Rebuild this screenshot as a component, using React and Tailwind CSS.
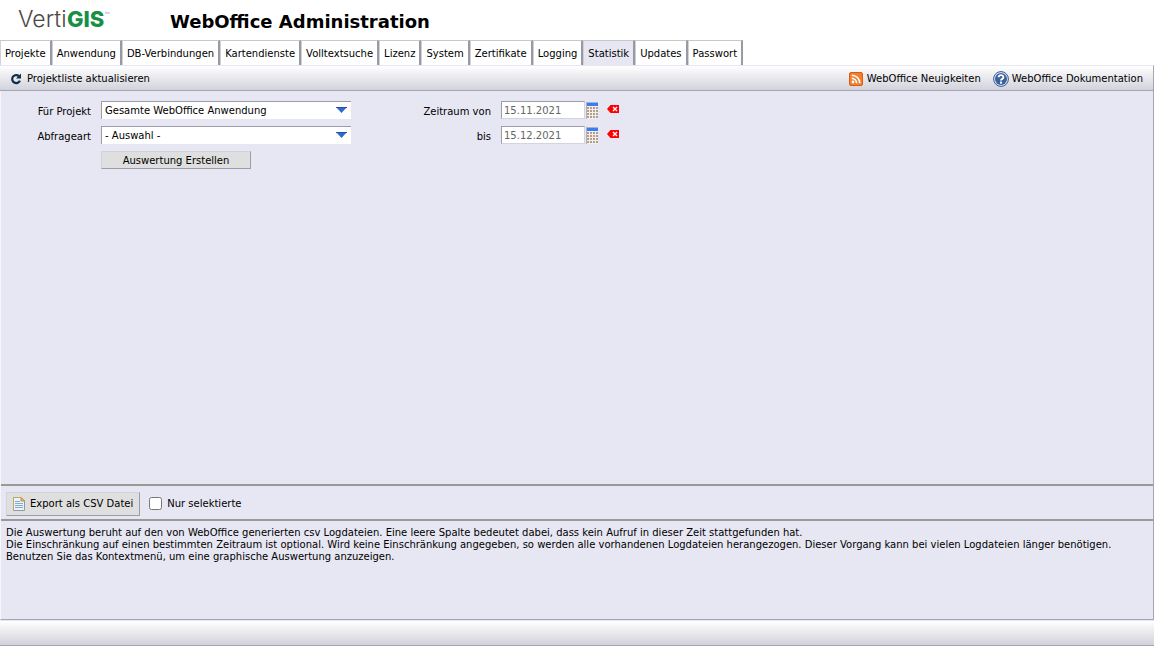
import { useState } from "react";

const tabs = [
  "Projekte",
  "Anwendung",
  "DB-Verbindungen",
  "Kartendienste",
  "Volltextsuche",
  "Lizenz",
  "System",
  "Zertifikate",
  "Logging",
  "Statistik",
  "Updates",
  "Passwort"
];

const Logo = () => (
  <svg width="96" height="32" viewBox="0 0 96 32" role="img" aria-label="VertiGIS">
    <text x="0" y="23" fill="#4d4744" fontSize="23" fontFamily="Inter, sans-serif" fontWeight="300">Verti</text>
    <text x="49" y="23" fill="#178f45" fontSize="22" fontFamily="Inter, sans-serif" fontWeight="800">GIS</text>
    <path d="M87 8.5H89M88 8.5V10M89.7 10V8.5L90.4 9.3L91.1 8.5V10" fill="none" stroke="#999" strokeWidth="0.5" />
  </svg>
);

const RefreshIcon = () => (
  <svg width="12" height="12" viewBox="0 0 12 12" aria-hidden="true">
    <path d="M8.9 3.1A4 4 0 1 0 9.9 7.6" fill="none" stroke="#0f2f47" strokeWidth="2.2" />
    <path d="M11 0.6V5.6H6Z" fill="#0f2f47" />
  </svg>
);

const FeedIcon = () => (
  <svg width="14" height="14" viewBox="0 0 14 14" aria-hidden="true">
    <rect x="0.5" y="0.5" width="13" height="13" rx="1.5" fill="#ee8130" stroke="#dd5a12" />
    <circle cx="4" cy="10" r="1.4" fill="#fff" />
    <path d="M2.8 6.4A4.8 4.8 0 0 1 7.6 11.2M2.8 3.2A8 8 0 0 1 10.8 11.2" fill="none" stroke="#fff" strokeWidth="1.6" />
  </svg>
);

const HelpIcon = () => (
  <svg width="16" height="16" viewBox="0 0 16 16" aria-hidden="true">
    <circle cx="8" cy="8" r="7.4" fill="#dfe8f4" stroke="#33598f" />
    <circle cx="8" cy="8" r="6" fill="#3a629c" />
    <path d="M5.6 6.3C5.6 3.4 10.4 3.5 10.4 6.2C10.4 7.9 8 7.8 8 9.6" fill="none" stroke="#fff" strokeWidth="1.9" />
    <rect x="7" y="10.6" width="2" height="2" fill="#fff" />
  </svg>
);

const CalendarIcon = () => (
  <svg width="12" height="17" viewBox="0 0 12 17" shapeRendering="crispEdges" aria-hidden="true">
    <rect width="12" height="17" fill="#b0b0b6" />
    <rect x="1" y="1" width="11" height="3" fill="#3a7cf8" />
    <rect x="1" y="4" width="11" height="13" fill="#f0f0f0" />
    {[5, 8, 11, 14].map((y) =>
      [1, 4, 7, 10].map((x) => (
        <rect key={`${x}-${y}`} x={x} y={y} width="2" height="2" fill={(x + y) % 2 ? "#a5a5a5" : "#cf9468"} />
      ))
    )}
  </svg>
);

const ClearIcon = () => (
  <svg width="12" height="8" viewBox="0 0 12 8" aria-hidden="true">
    <path d="M0 4L3.5 0H12V8H3.5Z" fill="#f00" />
    <path d="M6 2L10 6M10 2L6 6" stroke="#fff" strokeWidth="1.3" />
  </svg>
);

const FileIcon = () => (
  <svg width="12" height="14" viewBox="0 0 12 14" aria-hidden="true">
    <path d="M0.5 0.5H8L11.5 4V13.5H0.5Z" fill="#eaf3fc" stroke="#8f9aa5" />
    <path d="M0.5 13V0.5H8" fill="none" stroke="#c5a75e" />
    <path d="M8 0.5V4H11.5Z" fill="#e8c568" stroke="#b8913c" />
    <path d="M2 4.5H7M2 6.5H10M2 8.5H10M2 10.5H10" stroke="#86a9cf" />
  </svg>
);

const SelectField = ({ id, label, options }) => (
  <>
    <label htmlFor={id} className="pt-[5px] text-right">{label}</label>
    <div className="relative">
      <select
        id={id}
        className="block h-[18px] w-full appearance-none border-t border-l border-[#9c9cab] bg-white pr-5 pl-[3px] text-[10px] outline-none"
      >
        {options.map((option) => <option key={option}>{option}</option>)}
      </select>
      <svg className="pointer-events-none absolute top-[6px] right-1" width="11" height="6" viewBox="0 0 11 6" aria-hidden="true">
        <path d="M0 0H11L5.5 6Z" fill="#3069cf" />
        <path d="M0 0.5H11" stroke="#24509f" />
      </svg>
    </div>
  </>
);

const DateField = ({ id, label, value }) => {
  const [date, setDate] = useState(value);

  return (
    <>
      <label htmlFor={id} className="pt-[5px] text-right">{label}</label>
      <div className="flex h-[18px] items-start">
        <input
          id={id}
          value={date}
          onChange={(event) => setDate(event.target.value)}
          className="h-[18px] w-[84px] border border-t-[#9c9cab] border-r-[#d4d4de] border-b-[#d4d4de] border-l-[#9c9cab] bg-white px-[2px] text-[10px] text-[#666] outline-none"
        />
        <button type="button" aria-label="Kalender" className="ml-px pt-px"><CalendarIcon /></button>
        <button type="button" aria-label="Datum löschen" className="ml-[9px] pt-1" onClick={() => setDate("")}><ClearIcon /></button>
      </div>
    </>
  );
};

export default function App() {
  return (
    <div className="flex min-h-screen flex-col bg-white font-['DejaVu_Sans',Verdana,sans-serif] text-[10px] leading-3 text-black">
      <header className="flex h-10 items-center">
        <div className="w-[170px] pl-[18px]"><Logo /></div>
        <h1 className="pt-1 text-lg font-bold">WebOffice Administration</h1>
      </header>

      <nav className="flex">
        {tabs.map((tab) => (
          <a
            key={tab}
            href="#"
            className={
              tab === "Statistik"
                ? "border-t border-r-2 border-l border-t-[#c8c8c8] border-r-[#9999a6] border-l-[#d0d0d8] bg-[#e7e7f3] px-1 pt-[7px] pb-[5px]"
                : "border-t border-r-2 border-l border-t-[#c8c8c8] border-r-[#9999a6] border-l-[#d0d0d8] px-1 pt-[7px] pb-[5px]"
            }
          >
            {tab}
          </a>
        ))}
      </nav>

      <div className="flex h-[26px] items-center justify-between border-t border-r border-b border-t-[#e7e7f3] border-r-[#a5a5b2] border-b-[#a5a5b2] bg-linear-to-b from-white to-[#d2d2dc] px-[10px] pt-px">
        <button type="button" className="flex items-center gap-[5px]"><RefreshIcon />Projektliste aktualisieren</button>
        <div className="flex items-center gap-3">
          <a href="#" className="flex items-center gap-1"><FeedIcon />WebOffice Neuigkeiten</a>
          <a href="#" className="flex items-center gap-[3px]"><HelpIcon />WebOffice Dokumentation</a>
        </div>
      </div>

      <main className="flex flex-1 flex-col border-r border-b border-l border-r-[#a5a5b2] border-b-[#a5a5b2] border-l-[#f5f5fa] bg-[#e7e7f3]">
        <form className="flex flex-1 items-start pt-[10px]">
          <div className="grid grid-cols-[90px_250px] gap-x-[10px] gap-y-[7px]">
            <SelectField id="project" label="Für Projekt" options={["Gesamte WebOffice Anwendung"]} />
            <SelectField id="query" label="Abfrageart" options={["- Auswahl -"]} />
            <button
              type="button"
              className="col-start-2 h-[18px] w-[150px] border border-t-[#d2d2dc] border-r-[#9c9cab] border-b-[#9c9cab] border-l-[#d2d2dc] bg-[#dfdfdf] pt-px"
            >
              Auswertung Erstellen
            </button>
          </div>
          <div className="grid grid-cols-[140px_auto] gap-x-[10px] gap-y-[7px]">
            <DateField id="from" label="Zeitraum von" value="15.11.2021" />
            <DateField id="until" label="bis" value="15.12.2021" />
          </div>
        </form>

        <div className="flex h-[37px] items-center border-y-2 border-[#999] px-[5px] pt-[2px]">
          <button
            type="button"
            className="flex h-6 items-center gap-[5px] border border-t-[#d2d2dc] border-r-[#9c9cab] border-b-[#9c9cab] border-l-[#d2d2dc] bg-[#dfdfdf] px-[6px]"
          >
            <FileIcon />
            <span className="pt-px">Export als CSV Datei</span>
          </button>
          <label className="ml-[9px] flex items-center gap-[5px]">
            <input type="checkbox" className="h-[13px] w-[13px]" />
            <span className="pt-px">Nur selektierte</span>
          </label>
        </div>

        <div className="min-h-[98px] px-[5px] pt-[6px]">
          <p>Die Auswertung beruht auf den von WebOffice generierten csv Logdateien. Eine leere Spalte bedeutet dabei, dass kein Aufruf in dieser Zeit stattgefunden hat.</p>
          <p>Die Einschränkung auf einen bestimmten Zeitraum ist optional. Wird keine Einschränkung angegeben, so werden alle vorhandenen Logdateien herangezogen. Dieser Vorgang kann bei vielen Logdateien länger benötigen.</p>
          <p>Benutzen Sie das Kontextmenü, um eine graphische Auswertung anzuzeigen.</p>
        </div>
      </main>

      <footer className="h-[26px] border-t border-b border-t-[#e7e7f3] border-b-[#a5a5b2] bg-linear-to-b from-white to-[#d2d2dc]" />
    </div>
  );
}
